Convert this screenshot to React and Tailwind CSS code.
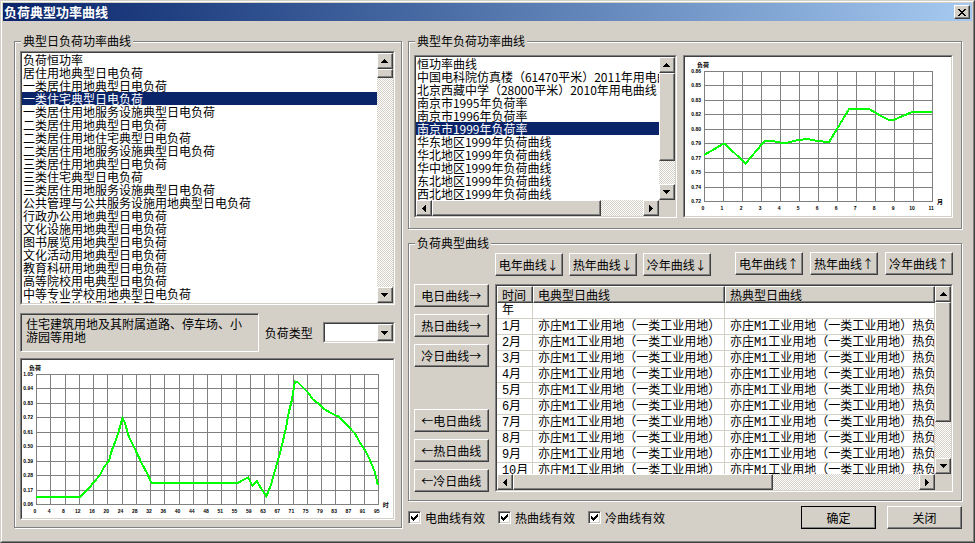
import React, { useState } from 'react';
import clsx from 'clsx';

const RAISED = 'border border-t-white border-l-white border-r-[#404040] border-b-[#404040] bg-[#d4d0c8] shadow-[inset_-1px_-1px_0_#808080]';
const SUNKEN = 'border border-t-[#808080] border-l-[#808080] border-r-white border-b-white';
const WELL = 'border border-t-[#404040] border-l-[#404040] border-r-[#d4d0c8] border-b-[#d4d0c8]';
const DITHER = 'bg-[conic-gradient(#fff_25%,#d4d0c8_0_50%,#fff_0_75%,#d4d0c8_0)] bg-[length:2px_2px]';

const DAY_CURVES = [
    '负荷恒功率',
    '居住用地典型日电负荷',
    '一类居住用地典型日电负荷',
    '一类住宅典型日电负荷',
    '一类居住用地服务设施典型日电负荷',
    '二类居住用地典型日电负荷',
    '二类居住用地住宅典型日电负荷',
    '二类居住用地服务设施典型日电负荷',
    '三类居住用地典型日电负荷',
    '三类住宅典型日电负荷',
    '三类居住用地服务设施典型日电负荷',
    '公共管理与公共服务设施用地典型日电负荷',
    '行政办公用地典型日电负荷',
    '文化设施用地典型日电负荷',
    '图书展览用地典型日电负荷',
    '文化活动用地典型日电负荷',
    '教育科研用地典型日电负荷',
    '高等院校用电典型日电负荷',
    '中等专业学校用地典型日电负荷',
    '中小学用地典型日电负荷',
];

const YEAR_CURVES = [
    '恒功率曲线',
    '中国电科院仿真楼（61470平米）2011年用电曲线',
    '北京西藏中学（28000平米）2010年用电曲线（',
    '南京市1995年负荷率',
    '南京市1996年负荷率',
    '南京市1999年负荷率',
    '华东地区1999年负荷曲线',
    '华北地区1999年负荷曲线',
    '华中地区1999年负荷曲线',
    '东北地区1999年负荷曲线',
    '西北地区1999年负荷曲线',
];

const ROWS = ['年', '1月', '2月', '3月', '4月', '5月', '6月', '7月', '8月', '9月', '10月'];

const DAY_CHART = {
    width: 371,
    height: 158,
    left: 14,
    right: 356,
    unit: '时',
    yLabels: ['1.05', '0.94', '0.83', '0.72', '0.61', '0.50', '0.39', '0.28', '0.17', '0.06'],
    xLabels: [0, 4, 8, 12, 16, 20, 24, 28, 32, 36, 40, 44, 48, 51, 55, 59, 63, 67, 71, 75, 79, 83, 87, 91, 95],
    points:
        '14,137 58,137 61,134 67,128 73,121 78,115 82,107 87,101 90,90 95,77 98,67 100.5,58 103,63 107,77 113,89 120,104 125,113 129.5,123 216,123 221,120 226,117.5 228,121 230.5,126 232,124 235,121.5 239,128 244.5,136.5 249,125 253,111 259,90 264,68 267,52 270,40 273,21.5 276,22.5 281,27.5 286,32.5 291,39.5 297,44 302,49 310,53.5 317.5,57 323,63 333,73.5 338,82.5 343,90 348,100 353,112 356,125',
};

const YEAR_CHART = {
    width: 266,
    height: 159,
    left: 19,
    right: 247,
    unit: '月',
    yLabels: ['0.86', '0.85', '0.83', '0.82', '0.80', '0.79', '0.77', '0.75', '0.74', '0.72'],
    xLabels: [0, 1, 2, 3, 4, 5, 6, 6, 7, 8, 9, 10, 11],
    points:
        '19,98 38,87 40,87 60.5,106.5 80,83.5 85,83.5 95,85.5 101,86 113,83 122,82 133,84 144,85 164,52 184,52 196,59 204,63 208,63 219,58.5 227,55 247,55',
};

function Arrow({ dir }) {
    const shapes = {
        up: '3,0 4,0 4,1 5,1 5,2 6,2 6,3 7,3 7,4 0,4 0,3 1,3 1,2 2,2 2,1 3,1',
        down: '0,0 7,0 7,1 6,1 6,2 5,2 5,3 4,3 4,4 3,4 3,3 2,3 2,2 1,2 1,1 0,1',
        left: '4,0 4,7 3,7 3,6 2,6 2,5 1,5 1,4 0,4 0,3 1,3 1,2 2,2 2,1 3,1 3,0',
        right: '0,0 1,0 1,1 2,1 2,2 3,2 3,3 4,3 4,4 3,4 3,5 2,5 2,6 1,6 1,7 0,7',
    };
    const flat = dir === 'up' || dir === 'down';
    return (
        <svg width={flat ? 7 : 4} height={flat ? 4 : 7} shapeRendering="crispEdges" aria-hidden="true">
            <polygon points={shapes[dir]} />
        </svg>
    );
}

function ArrowButton({ dir, label }) {
    return (
        <button type="button" aria-label={label} className={clsx(RAISED, 'flex size-4 shrink-0 items-center justify-center')}>
            <Arrow dir={dir} />
        </button>
    );
}

function ScrollBar({ horizontal, thumb }) {
    return (
        <div className={clsx(DITHER, 'flex min-h-0 min-w-0', horizontal ? 'h-4' : 'w-4 flex-col')}>
            <ArrowButton dir={horizontal ? 'left' : 'up'} label={horizontal ? '向左' : '向上'} />
            <div className="min-h-0 min-w-0 flex-1">
                <div className={RAISED} style={horizontal ? { width: thumb, height: '100%' } : { height: thumb, width: '100%' }} />
            </div>
            <ArrowButton dir={horizontal ? 'right' : 'down'} label={horizontal ? '向右' : '向下'} />
        </div>
    );
}

function Group({ title, className, children }) {
    return (
        <fieldset className="min-w-0 border border-[#808080] pl-[5px] pr-[6px] shadow-[inset_1px_1px_0_#fff,1px_1px_0_#fff]">
            <legend className="relative ml-px bg-[#d4d0c8] px-[2px] leading-4">{title}</legend>
            <div className={className}>{children}</div>
        </fieldset>
    );
}

function ListBox({ label, items, selected, onSelect }) {
    return (
        <ul role="listbox" aria-label={label} className="min-h-0 min-w-0 overflow-hidden bg-white leading-[13px]">
            {items.map((item, i) => (
                <li
                    key={item}
                    role="option"
                    aria-selected={i === selected}
                    onClick={() => onSelect(i)}
                    className={clsx('h-[13px] whitespace-nowrap px-px', i === selected && 'bg-[#0a246a] text-white')}
                >
                    {item}
                </li>
            ))}
        </ul>
    );
}

function Chart({ data, title }) {
    const { width, height, left, right, unit, xLabels, yLabels, points } = data;
    const top = 14;
    const bottom = 144;
    const stepX = (right - left) / (xLabels.length - 1);
    const stepY = (bottom - top) / (yLabels.length - 1);
    return (
        <div className={clsx(SUNKEN, 'min-w-0 flex-1')}>
            <div className={clsx(WELL, 'h-full bg-white')}>
                <svg viewBox={`0 0 ${width} ${height}`} className="block h-auto w-full font-['Liberation_Sans','Noto_Sans_CJK_SC',sans-serif] text-[5px] font-bold" role="img" aria-label={title}>
                    <g stroke="#808080" shapeRendering="crispEdges">
                        {xLabels.map((_, i) => {
                            const x = Math.round(left + i * stepX) + 0.5;
                            return <line key={i} x1={x} x2={x} y1={top} y2={bottom + 1} />;
                        })}
                        {yLabels.map((_, i) => {
                            const y = Math.round(top + i * stepY) + 0.5;
                            return <line key={i} x1={left} x2={right + 1} y1={y} y2={y} />;
                        })}
                    </g>
                    {yLabels.map((label, i) => (
                        <text key={label} x={left - 3} y={top + i * stepY + 2} textAnchor="end">{label}</text>
                    ))}
                    {xLabels.map((label, i) => (
                        <text key={i} x={left + i * stepX - 1} y={bottom + 9} textAnchor="middle">{label}</text>
                    ))}
                    <text x={left - 7} y="10" className="text-[6px]">负荷</text>
                    <text x={right + 5} y={bottom + 3} className="text-[6px]">{unit}</text>
                    <polyline points={points} fill="none" stroke="#00ff00" strokeWidth="2" shapeRendering="crispEdges" />
                </svg>
            </div>
        </div>
    );
}

function PushButton({ wide, isDefault, children }) {
    return (
        <button
            type="button"
            className={clsx(
                RAISED,
                'h-[23px] shrink-0 whitespace-nowrap text-center leading-4',
                wide ? 'w-[75px]' : 'w-[68px]',
                isDefault && 'outline outline-black -outline-offset-1'
            )}
        >
            {children}
        </button>
    );
}

function CheckBox({ id, label }) {
    return (
        <div className="flex items-center gap-1">
            <span className="relative flex">
                <input
                    id={id}
                    type="checkbox"
                    defaultChecked
                    className={clsx(SUNKEN, 'peer size-[13px] appearance-none bg-white shadow-[inset_1px_1px_0_#404040,inset_-1px_-1px_0_#d4d0c8]')}
                />
                <svg width="7" height="7" className="pointer-events-none absolute left-[3px] top-[3px] hidden peer-checked:block" shapeRendering="crispEdges" aria-hidden="true">
                    <path d="M0 2h1v1h1v1h1v-1h1v-1h1v-1h1v-1h1v3h-1v1h-1v1h-1v1h-1v1h-1v-1h-1v-1h-1z" />
                </svg>
            </span>
            <label htmlFor={id} className="leading-4">{label}</label>
        </div>
    );
}

function CurveTable() {
    const head = 'h-[17px] overflow-hidden whitespace-nowrap border border-t-white border-l-white border-r-[#404040] border-b-[#404040] bg-[#d4d0c8] px-1 text-left font-normal leading-[14px] shadow-[inset_-1px_-1px_0_#808080]';
    const cell = 'h-4 overflow-hidden whitespace-nowrap border-b border-r border-[#d4d0c8] px-[5px] pt-[2px] leading-[13px]';
    return (
        <div className="h-[188px] min-w-0 overflow-hidden bg-white">
            <table className="w-full table-fixed border-separate border-spacing-0">
                <colgroup>
                    <col className="w-[36px]" />
                    <col className="w-[192px]" />
                    <col />
                </colgroup>
                <thead>
                    <tr>
                        <th className={head}>时间</th>
                        <th className={head}>电典型日曲线</th>
                        <th className={head}>热典型日曲线</th>
                    </tr>
                </thead>
                <tbody className="font-['Liberation_Mono','Noto_Sans_CJK_SC',monospace]">
                    {ROWS.map((row, i) => (
                        <tr key={row}>
                            <td className={cell}>{row}</td>
                            <td className={cell}>{i > 0 && '亦庄M1工业用地（一类工业用地）'}</td>
                            <td className={cell}>{i > 0 && '亦庄M1工业用地（一类工业用地）热负荷'}</td>
                        </tr>
                    ))}
                </tbody>
            </table>
        </div>
    );
}

export default function App() {
    const [day, setDay] = useState(3);
    const [year, setYear] = useState(5);

    return (
        <div className="flex min-h-screen flex-col border border-t-[#d4d0c8] border-l-[#d4d0c8] border-r-[#404040] border-b-[#404040] bg-[#d4d0c8] font-['Noto_Sans_CJK_SC',sans-serif] text-[12px] text-black">
            <div className="flex flex-1 flex-col border border-t-white border-l-white border-r-[#808080] border-b-[#808080] p-px">
                <header className="flex h-[18px] items-center justify-between bg-linear-to-r from-[#0a246a] to-[#a6caf0] pl-px pr-[2px]">
                    <h1 className="text-[13px] font-bold leading-4 text-white">负荷典型功率曲线</h1>
                    <button type="button" aria-label="关闭窗口" className={clsx(RAISED, 'flex h-[14px] w-4 items-center justify-center')}>
                        <svg width="8" height="7" shapeRendering="crispEdges" aria-hidden="true">
                            <path d="M0 0h2v1h1v1h2v-1h1v-1h2v1h-1v1h-1v1h-1v1h1v1h1v1h1v1h-2v-1h-1v-1h-2v1h-1v1h-2v-1h1v-1h1v-1h1v-1h-1v-1h-1v-1h-1z" />
                        </svg>
                    </button>
                </header>

                <main className="grid grid-cols-[7fr_10fr] items-start gap-[6px] px-[10px] pt-3 pl-[11px]">
                    <Group title="典型日负荷功率曲线" className="pb-[7px] pt-[2px]">
                        <div className={SUNKEN}>
                            <div className={clsx(WELL, 'grid h-[252px] grid-cols-[1fr_16px]')}>
                                <ListBox label="典型日负荷功率曲线" items={DAY_CURVES} selected={day} onSelect={setDay} />
                                <ScrollBar thumb="9px" />
                            </div>
                        </div>
                        <div className="mt-2 flex items-center">
                            <p className={clsx(SUNKEN, 'h-[39px] flex-1 px-[5px] pt-[3px] leading-[13px] shadow-[inset_1px_1px_0_#404040]')}>
                                住宅建筑用地及其附属道路、停车场、小游园等用地
                            </p>
                            <label htmlFor="loadType" className="ml-[6px] mr-[10px]">负荷类型</label>
                            <div className={clsx(SUNKEN, 'w-[72px]')}>
                                <div className={clsx(WELL, 'relative flex')}>
                                    <select id="loadType" className="h-[17px] w-full appearance-none bg-white">
                                        <option value="" aria-label="未选择" />
                                    </select>
                                    <span className={clsx(RAISED, 'pointer-events-none absolute inset-y-0 right-0 flex w-4 items-center justify-center')}>
                                        <Arrow dir="down" />
                                    </span>
                                </div>
                            </div>
                        </div>
                        <div className="mt-[6px] flex">
                            <Chart data={DAY_CHART} title="典型日负荷功率曲线图" />
                        </div>
                    </Group>

                    <div className="flex min-w-0 flex-col">
                        <Group title="典型年负荷功率曲线" className="flex gap-[6px] pb-[10px] pr-[2px] pt-[6px]">
                            <div className={clsx(SUNKEN, 'w-[263px]')}>
                                <div className={clsx(WELL, 'grid grid-cols-[minmax(0,1fr)_16px] grid-rows-[143px_16px]')}>
                                    <ListBox label="典型年负荷功率曲线" items={YEAR_CURVES} selected={year} onSelect={setYear} />
                                    <ScrollBar thumb="79%" />
                                    <ScrollBar horizontal thumb="80%" />
                                </div>
                            </div>
                            <Chart data={YEAR_CHART} title="典型年负荷功率曲线图" />
                        </Group>

                        <div className="mt-[6px]">
                            <Group title="负荷典型曲线" className="pb-2 pr-[2px] pt-px">
                                <div className="flex justify-between pl-[81px]">
                                    <div className="flex gap-[6px] pt-px">
                                        <PushButton>电年曲线↓</PushButton>
                                        <PushButton>热年曲线↓</PushButton>
                                        <PushButton>冷年曲线↓</PushButton>
                                    </div>
                                    <div className="flex gap-[7px]">
                                        <PushButton>电年曲线↑</PushButton>
                                        <PushButton>热年曲线↑</PushButton>
                                        <PushButton>冷年曲线↑</PushButton>
                                    </div>
                                </div>
                                <div className="mt-2 flex gap-[6px]">
                                    <div className="flex flex-col justify-between">
                                        <div className="flex flex-col gap-[7px]">
                                            <PushButton wide>电日曲线→</PushButton>
                                            <PushButton wide>热日曲线→</PushButton>
                                            <PushButton wide>冷日曲线→</PushButton>
                                        </div>
                                        <div className="flex flex-col gap-[7px]">
                                            <PushButton wide>←电日曲线</PushButton>
                                            <PushButton wide>←热日曲线</PushButton>
                                            <PushButton wide>←冷日曲线</PushButton>
                                        </div>
                                    </div>
                                    <div className={clsx(SUNKEN, 'min-w-0 flex-1')}>
                                        <div className={clsx(WELL, 'grid grid-cols-[minmax(0,1fr)_16px]')}>
                                            <CurveTable />
                                            <ScrollBar thumb="77%" />
                                            <ScrollBar horizontal thumb="64%" />
                                        </div>
                                    </div>
                                </div>
                            </Group>
                        </div>

                        <div className="mt-[5px] flex items-center justify-between">
                            <div className="flex gap-[13px]">
                                <CheckBox id="electric" label="电曲线有效" />
                                <CheckBox id="heat" label="热曲线有效" />
                                <CheckBox id="cold" label="冷曲线有效" />
                            </div>
                            <div className="flex gap-[11px]">
                                <PushButton wide isDefault>确定</PushButton>
                                <PushButton wide>关闭</PushButton>
                            </div>
                        </div>
                    </div>
                </main>
            </div>
        </div>
    );
}
